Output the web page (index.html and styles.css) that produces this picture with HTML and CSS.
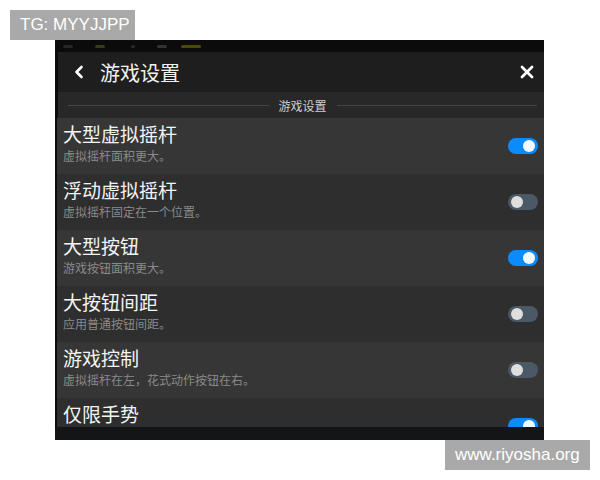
FILE: index.html
```html
<!DOCTYPE html>
<html lang="zh">
<head>
<meta charset="utf-8">
<title>游戏设置</title>
<link rel="stylesheet" href="styles.css">
</head>
<body>
<div class="page">
  <div class="wm wm-top">TG: MYYJJPP</div>
  <div class="screen">
    <div class="status">
      <span class="si si1"></span><span class="si si2"></span><span class="si si3"></span><span class="si si4"></span><span class="si si5"></span>
    </div>
    <div class="header">
      <svg class="back" width="10" height="14" viewBox="0 0 10 14"><path d="M7.5 2 L2.5 7 L7.5 12" fill="none" stroke="#fff" stroke-width="2.6" stroke-linecap="round" stroke-linejoin="round"/></svg>
      <span class="htitle">游戏设置</span>
      <span class="spacer"></span>
      <svg class="close" width="14" height="14" viewBox="0 0 14 14"><path d="M2 2 L12 12 M12 2 L2 12" stroke="#fff" stroke-width="2.8" stroke-linecap="round"/></svg>
    </div>
    <div class="section"><span class="line"></span><span class="stitle">游戏设置</span><span class="line"></span></div>
    <div class="row light">
      <div class="txt"><div class="t">大型虚拟摇杆</div><div class="s">虚拟摇杆面积更大。</div></div>
      <span class="tog on"></span>
    </div>
    <div class="row dark">
      <div class="txt"><div class="t">浮动虚拟摇杆</div><div class="s">虚拟摇杆固定在一个位置。</div></div>
      <span class="tog"></span>
    </div>
    <div class="row light">
      <div class="txt"><div class="t">大型按钮</div><div class="s">游戏按钮面积更大。</div></div>
      <span class="tog on"></span>
    </div>
    <div class="row dark">
      <div class="txt"><div class="t">大按钮间距</div><div class="s">应用普通按钮间距。</div></div>
      <span class="tog"></span>
    </div>
    <div class="row light">
      <div class="txt"><div class="t">游戏控制</div><div class="s">虚拟摇杆在左，花式动作按钮在右。</div></div>
      <span class="tog"></span>
    </div>
    <div class="row dark last">
      <div class="txt"><div class="t">仅限手势</div><div class="s">&nbsp;</div></div>
      <span class="tog on"></span>
    </div>
    <div class="nav"></div>
  </div>
  <div class="wm wm-bottom">www.riyosha.org</div>
</div>
</body>
</html>
```
FILE: styles.css
```css
html, body { margin: 0; padding: 0; background: #fff; }
body { width: 600px; height: 480px; overflow: hidden; font-family: "Noto Sans CJK SC", "Noto Sans", sans-serif; }
.page { display: flex; flex-direction: column; padding-top: 10px; }
.wm { background: #a9a9a9; color: #fff; font-family: "Liberation Sans", Arial, sans-serif; font-size: 17px; height: 30px; line-height: 30px; box-sizing: border-box; white-space: nowrap; }
.wm-top { margin-left: 10px; width: 125px; padding-left: 10px; }
.wm-bottom { align-self: flex-end; margin-right: 10px; width: 145px; padding-left: 10px; }
.screen { margin-left: 55px; width: 489px; height: 400px; background: #0b0b0b; display: flex; flex-direction: column; overflow: hidden; }
.status { height: 12px; flex: none; display: flex; align-items: center; }
.si { display: block; height: 3px; border-radius: 2px; background: #2a2a1c; }
.si1 { width: 10px; margin-left: 8px; background: #262626; }
.si2 { width: 10px; margin-left: 22px; background: #3b3a14; }
.si3 { width: 4px; margin-left: 26px; background: #2a2a2a; }
.si4 { width: 10px; margin-left: 22px; background: #333; }
.si5 { width: 20px; margin-left: 14px; background: #4d4810; }
.header { height: 40px; flex: none; margin-left: 3px; background: #1e1e1e; display: flex; align-items: center; }
.back { margin-left: 16px; }
.htitle { margin-left: 16px; color: #f2f2f2; font-size: 20px; }
.spacer { flex: 1; }
.close { margin-right: 10px; }
.section { height: 26px; flex: none; margin-left: 3px; background: #282828; display: flex; align-items: center; padding: 0 7px 0 10px; gap: 10px; }
.line { flex: 1; height: 1px; background: #464646; }
.stitle { color: #cfcfcf; font-size: 12px; }
.row { height: 56px; flex: none; margin-left: 2px; display: flex; align-items: flex-start; box-sizing: border-box; padding-left: 6px; }
.row.light { background: #363636; }
.row.dark { background: #2e2e2e; }
.row.last { height: 29px; overflow: hidden; }
.txt { flex: 1; padding-top: 5px; }
.t { color: #f4f4f4; font-size: 19px; line-height: 22px; }
.s { color: #8a8a8a; font-size: 12px; line-height: 16px; margin-top: 3px; }
.tog { flex: none; width: 30px; height: 16px; border-radius: 8px; background: #4b5866; margin-top: 20px; margin-right: 6px; position: relative; }
.tog::after { content: ""; position: absolute; top: 2px; left: 3px; width: 12px; height: 12px; border-radius: 50%; background: #dedede; }
.tog.on { background: #0a8cff; }
.tog.on::after { left: auto; right: 3px; background: #f4f8ff; }
.nav { flex: 1; background: #141516; }
```
